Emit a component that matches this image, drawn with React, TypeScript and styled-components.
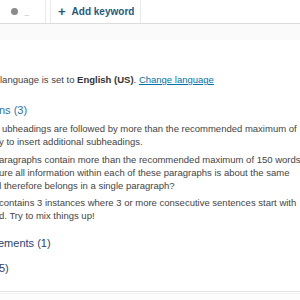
import styled, { createGlobalStyle } from 'styled-components';

const GlobalStyle = createGlobalStyle`
  html, body {
    margin: 0;
    padding: 0;
    background: #ffffff;
    overflow: hidden;
  }
  body {
    font-family: 'Liberation Sans', Arial, sans-serif;
    -webkit-font-smoothing: antialiased;
  }
`;

const Page = styled.div`
  width: 300px;
  height: 300px;
  overflow: hidden;
  background: #ffffff;
  display: flex;
  flex-direction: column;
`;

const TabBar = styled.div`
  display: flex;
  align-items: stretch;
  height: 23px;
  border-bottom: 1px solid #dcdcdc;
  background: #ffffff;
  flex-shrink: 0;
`;

const Tab = styled.div<{ $width: number; $gap?: number }>`
  display: flex;
  align-items: center;
  gap: 6px;
  width: ${(p) => p.$width}px;
  margin-left: ${(p) => p.$gap ?? 0}px;
  padding-left: ${(p) => (p.$gap ? 7 : 11)}px;
  box-sizing: border-box;
  border-right: 1px solid #e8e8e8;
  border-left: ${(p) => (p.$gap ? '1px solid #e8e8e8' : 'none')};
  font-size: 10px;
  font-weight: 700;
  color: #1f5a80;
  white-space: nowrap;
`;

const Plus = styled.span`
  font-size: 13px;
  line-height: 1;
  margin-top: -1px;
`;

const Dot = styled.span`
  width: 7px;
  height: 7px;
  border-radius: 50%;
  background: #8a8a8a;
`;

const Ellipsis = styled.span`
  color: #c2c2c2;
  font-weight: 400;
  font-size: 9px;
  letter-spacing: -1px;
  margin-top: 3px;
`;

const Band = styled.div`
  height: 16px;
  background: #fafafa;
  flex-shrink: 0;
`;

const Content = styled.div`
  display: flex;
  flex-direction: column;
  padding: 33px 0 16px;
  border-bottom: 1px solid #e0e0e0;
  color: #444444;
  font-size: 9.5px;
  line-height: 13px;
  white-space: nowrap;
  flex-shrink: 0;
`;

const Footer = styled.div`
  flex: 1;
  border-top: 1px solid #efefef;
  margin-top: 1px;
  background: #fcfcfc;
`;

const LanguageNote = styled.p`
  margin: 0 0 17px;
`;

const Strong = styled.strong`
  color: #333333;
`;

const Link = styled.a`
  color: #0073aa;
  text-decoration: underline;
`;

const SectionTitle = styled.h3<{ $tone: 'open' | 'closed'; $indent?: number }>`
  margin: 0;
  font-size: 11px;
  font-weight: 400;
  line-height: 14px;
  text-indent: ${(p) => p.$indent ?? 0}px;
  color: ${(p) => (p.$tone === 'open' ? '#2f70ac' : '#2c3f72')};
`;

const ResultList = styled.ul`
  list-style: none;
  margin: 5px 0 0;
  padding: 0;
  display: flex;
  flex-direction: column;
  gap: 4.5px;
`;

const ResultItem = styled.li`
  display: flex;
  flex-direction: column;
`;

const Line = styled.span<{ $indent?: number }>`
  display: block;
  text-indent: ${(p) => p.$indent ?? 0}px;
`;

const Collapsed = styled.div`
  display: flex;
  flex-direction: column;
  gap: 11px;
  margin-top: 13.5px;
`;

const results: { text: string; indent?: number }[][] = [
  [
    { text: 'ubheadings are followed by more than the recommended maximum of', indent: 2 },
    { text: 'y to insert additional subheadings.', indent: -1 },
  ],
  [
    { text: 'aragraphs contain more than the recommended maximum of 150 words', indent: -1 },
    { text: 'ure all information within each of these paragraphs is about the same', indent: -1 },
    { text: 'd therefore belongs in a single paragraph?', indent: -4 },
  ],
  [
    { text: 'contains 3 instances where 3 or more consecutive sentences start with', indent: -1 },
    { text: 'd. Try to mix things up!', indent: -1 },
  ],
];

export default function App() {
  return (
    <Page>
      <GlobalStyle />
      <TabBar>
        <Tab $width={46}>
          <Dot />
          <Ellipsis>...</Ellipsis>
        </Tab>
        <Tab $width={91} $gap={4}>
          <Plus>+</Plus>
          <span>Add keyword</span>
        </Tab>
      </TabBar>
      <Band />
      <Content>
        <LanguageNote>
          language is set to <Strong>English (US)</Strong>. <Link href="#">Change language</Link>
        </LanguageNote>
        <SectionTitle $tone="open" $indent={-1}>ns (3)</SectionTitle>
        <ResultList>
          {results.map((item, i) => (
            <ResultItem key={i}>
              {item.map((l, j) => (
                <Line key={j} $indent={l.indent}>
                  {l.text}
                </Line>
              ))}
            </ResultItem>
          ))}
        </ResultList>
        <Collapsed>
          <SectionTitle $tone="closed" $indent={-2}>ements (1)</SectionTitle>
          <SectionTitle $tone="closed" $indent={-1}>5)</SectionTitle>
        </Collapsed>
      </Content>
      <Footer />
    </Page>
  );
}
